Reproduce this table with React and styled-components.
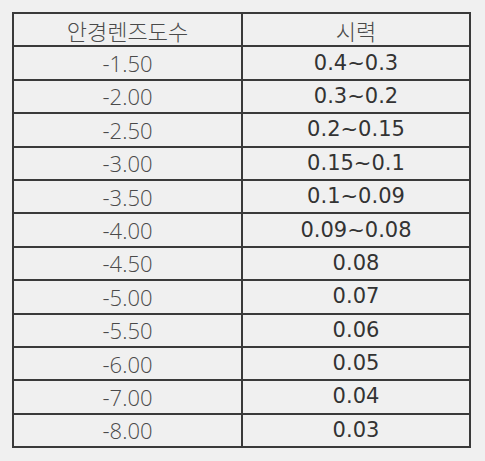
import React from "react";
import styled, { createGlobalStyle } from "styled-components";

const Global = createGlobalStyle`
  html, body { margin: 0; padding: 0; background: #f0f0f0; }
`;

const Page = styled.div`
  width: 485px;
  height: 461px;
  padding: 12px 0 0 12px;
  box-sizing: border-box;
  background: #f0f0f0;
`;

const Table = styled.table`
  border-collapse: collapse;
  width: 459px;
  table-layout: fixed;
  border: 2px solid #3a3a3a;
`;

const Row = styled.tr`
  height: 33.4px;
`;

const Cell = styled.td`
  border: 2px solid #3a3a3a;
  padding: 0;
  text-align: center;
  vertical-align: middle;
  font-size: ${(p) => (p.$bold ? "21px" : "22px")};
  line-height: 1;
  white-space: nowrap;
  color: ${(p) => (p.$bold ? "#333" : "#4a4a4a")};
  font-family: ${(p) =>
    p.$bold
      ? '"DejaVu Sans", sans-serif'
      : '"Open Sans", "Noto Sans CJK KR", sans-serif'};
  font-weight: ${(p) => (p.$bold ? 400 : 300)};
`;

const HeadCell = styled(Cell).attrs({ as: "th" })`
  font-family: "Noto Sans CJK KR", sans-serif;
  font-weight: 300;
  color: #4a4a4a;
  font-size: 22px;
`;

const rows = [
  ["-1.50", "0.4~0.3"],
  ["-2.00", "0.3~0.2"],
  ["-2.50", "0.2~0.15"],
  ["-3.00", "0.15~0.1"],
  ["-3.50", "0.1~0.09"],
  ["-4.00", "0.09~0.08"],
  ["-4.50", "0.08"],
  ["-5.00", "0.07"],
  ["-5.50", "0.06"],
  ["-6.00", "0.05"],
  ["-7.00", "0.04"],
  ["-8.00", "0.03"],
];

export default function App() {
  return (
    <Page>
      <Global />
      <Table>
        <colgroup>
          <col style={{ width: 229 }} />
          <col />
        </colgroup>
        <thead>
          <Row>
            <HeadCell>안경렌즈도수</HeadCell>
            <HeadCell>시력</HeadCell>
          </Row>
        </thead>
        <tbody>
          {rows.map(([a, b]) => (
            <Row key={a}>
              <Cell>{a}</Cell>
              <Cell $bold>{b}</Cell>
            </Row>
          ))}
        </tbody>
      </Table>
    </Page>
  );
}
